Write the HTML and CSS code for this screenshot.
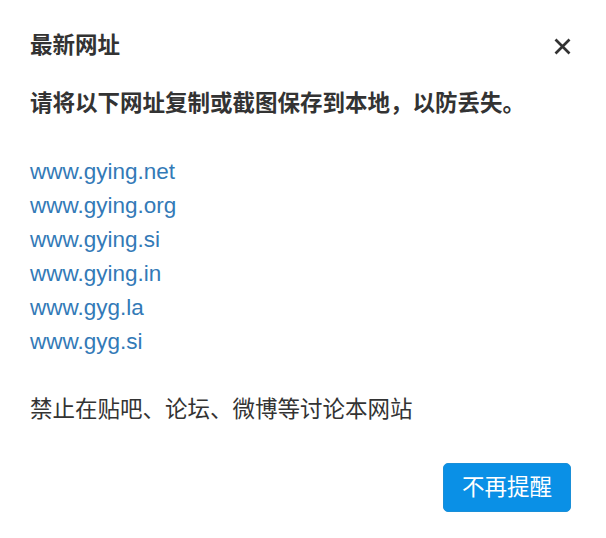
FILE: index.html
```html
<!DOCTYPE html>
<html lang="zh-CN">
<head>
<meta charset="utf-8">
<title>最新网址</title>
<link rel="stylesheet" href="styles.css">
</head>
<body>
<div class="modal">
  <div class="modal-header">
    <h4 class="modal-title">最新网址</h4>
    <button class="close" aria-label="关闭">
      <svg width="17" height="17" viewBox="0 0 17 17"><path d="M1.5 1.5 L15.5 15.5 M15.5 1.5 L1.5 15.5" stroke="#333" stroke-width="2.7" stroke-linecap="butt"/></svg>
    </button>
  </div>
  <div class="modal-body">
    <p class="notice">请将以下网址复制或截图保存到本地，以防丢失。</p>
    <ul class="links">
      <li><a href="#">www.gying.net</a></li>
      <li><a href="#">www.gying.org</a></li>
      <li><a href="#">www.gying.si</a></li>
      <li><a href="#">www.gying.in</a></li>
      <li><a href="#">www.gyg.la</a></li>
      <li><a href="#">www.gyg.si</a></li>
    </ul>
    <p class="warn">禁止在贴吧、论坛、微博等讨论本网站</p>
  </div>
  <div class="modal-footer">
    <button class="btn">不再提醒</button>
  </div>
</div>
</body>
</html>
```
FILE: styles.css
```css
html, body {
  margin: 0;
  padding: 0;
  background: #fff;
}
body {
  font-family: "Liberation Sans", "Noto Sans CJK SC", sans-serif;
  font-size: 22.5px;
  line-height: 34px;
  color: #333;
}
.modal {
  padding: 29px 35px 0 30px;
}
.modal-header {
  display: flex;
  justify-content: space-between;
  align-items: center;
}
.modal-title {
  margin: 0;
  font-size: 22.5px;
  font-weight: bold;
  line-height: 34px;
}
.close {
  border: 0;
  background: none;
  padding: 0;
  width: 17px;
  height: 17px;
  display: flex;
}
.modal-body {
  padding-top: 24px;
}
.notice {
  margin: 0;
  font-weight: bold;
}
.links {
  list-style: none;
  margin: 34px 0 0;
  padding: 0;
}
.links a {
  color: #337ab7;
  text-decoration: none;
}
.warn {
  margin: 34px 0 0;
}
.modal-footer {
  display: flex;
  justify-content: flex-end;
  padding-top: 36px;
}
.btn {
  font-family: "Liberation Sans", "Noto Sans CJK SC", sans-serif;
  font-size: 22.5px;
  line-height: 33px;
  padding: 7px 18px;
  border: 1px solid #1a8fd8;
  border-radius: 5px;
  background: #0a90e6;
  color: #fff;
}
```
